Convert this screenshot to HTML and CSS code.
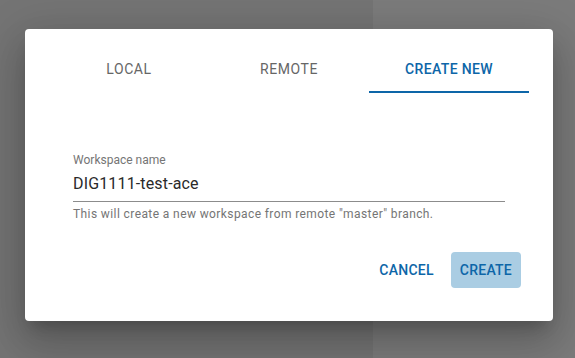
FILE: index.html
```html
<!DOCTYPE html>
<html lang="en">
<head>
    <meta charset="UTF-8">
    <meta name="viewport" content="width=device-width, initial-scale=1.0">
    <link rel="stylesheet" href="styles.css">
</head>
<body>
    <div class="backdrop">
        <div class="backdrop-left"></div>
        <div class="backdrop-right"></div>
    </div>

    <div class="dialog">
        <div class="tabs">
            <div class="tab">Local</div>
            <div class="tab">Remote</div>
            <div class="tab active">Create new</div>
        </div>

        <div class="dialog-content">
            <label class="field">
                <span class="field-label">Workspace name</span>
                <span class="field-input">DIG1111-test-ace</span>
                <span class="field-helper">This will create a new workspace from remote "master" branch.</span>
            </label>
        </div>

        <div class="dialog-actions">
            <button class="btn">Cancel</button>
            <button class="btn btn-tonal">Create</button>
        </div>
    </div>
</body>
</html>
```

FILE: styles.css
```css
html, body {
    margin: 0;
    padding: 0;
    width: 100vw;
    height: 100vh;
    overflow: hidden;
    font-family: Roboto, 'Liberation Sans', sans-serif;
}

.backdrop {
    display: grid;
    grid-template-columns: 373px 1fr;
    height: 100%;
}

.backdrop-left {
    background: #747474;
}

.backdrop-right {
    background: #7b7b7b;
}

.dialog {
    position: absolute;
    top: 29px;
    left: 25px;
    width: 528px;
    height: 292px;
    box-sizing: border-box;
    background: #fff;
    border-radius: 4px;
    box-shadow: 0 11px 15px -7px rgba(0, 0, 0, 0.2),
                0 24px 38px 3px rgba(0, 0, 0, 0.14),
                0 9px 46px 8px rgba(0, 0, 0, 0.12);
    display: flex;
    flex-direction: column;
    padding: 16px 24px 0;
}

.tabs {
    display: grid;
    grid-template-columns: repeat(3, 1fr);
    height: 48px;
}

.tab {
    display: flex;
    align-items: center;
    justify-content: center;
    font-size: 14px;
    font-weight: 400;
    letter-spacing: 0.55px;
    text-transform: uppercase;
    color: #666;
    box-sizing: border-box;
}

.tab.active {
    color: #0d66a8;
    font-weight: 500;
    letter-spacing: 0.35px;
    border-bottom: 2px solid #0d66a8;
    padding-top: 2px;
}

.dialog-content {
    padding: 60px 24px 0;
}

.field {
    display: flex;
    flex-direction: column;
    width: 432px;
}

.field-label {
    font-size: 12px;
    line-height: 14px;
    color: #757575;
}

.field-input {
    font-size: 16px;
    line-height: 22px;
    letter-spacing: 0.15px;
    color: #2a2a2a;
    padding: 6px 0 6px;
    border-bottom: 1px solid #8c8c8c;
}

.field-helper {
    font-size: 12px;
    line-height: 14px;
    color: #757575;
    margin-top: 5px;
    letter-spacing: 0.4px;
}

.dialog-actions {
    display: flex;
    justify-content: flex-end;
    gap: 8px;
    padding: 31px 8px 0;
}

.btn {
    height: 36px;
    min-width: 64px;
    padding: 0 9px;
    border: none;
    border-radius: 4px;
    background: transparent;
    font-family: inherit;
    font-size: 14px;
    font-weight: 500;
    letter-spacing: 0.25px;
    text-transform: uppercase;
    color: #0d66a8;
}

.btn-tonal {
    background: #aacde3;
}
```
